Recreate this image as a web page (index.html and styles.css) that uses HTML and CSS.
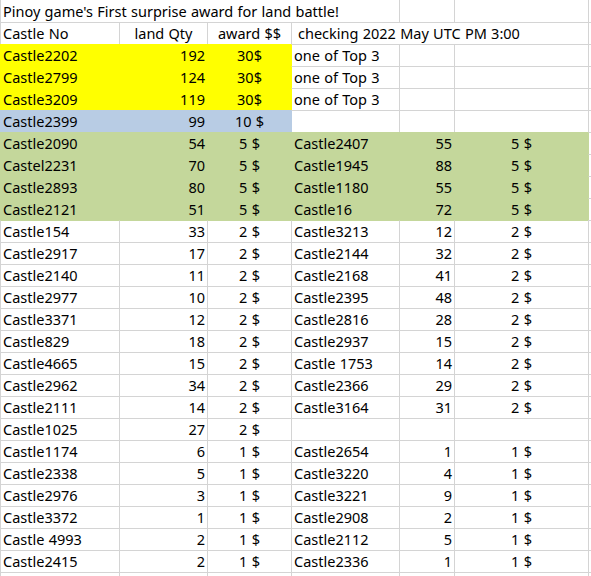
FILE: index.html
```html
<!DOCTYPE html>
<html lang="en">
<head>
<meta charset="utf-8">
<title>Pinoy game award sheet</title>
<link rel="stylesheet" href="styles.css">
</head>
<body>
<div class="sheet">
  <div class="c t0 span4">Pinoy game's First surprise award for land battle!</div>
  <div class="c t0"></div><div class="c t0"></div><div class="c t0"></div>

  <div class="c">Castle No</div><div class="c m">land Qty</div><div class="c m">award $$</div>
  <div class="c span3 ind">checking 2022 May UTC PM 3:00</div><div class="c"></div>

  <div class="c fy">Castle2202</div><div class="c fy r">192</div><div class="c fy m">30$</div>
  <div class="c ly">one of Top 3</div><div class="c"></div><div class="c"></div><div class="c"></div>

  <div class="c fy">Castle2799</div><div class="c fy r">124</div><div class="c fy m">30$</div>
  <div class="c ly">one of Top 3</div><div class="c"></div><div class="c"></div><div class="c"></div>

  <div class="c fy">Castle3209</div><div class="c fy r">119</div><div class="c fy m">30$</div>
  <div class="c ly">one of Top 3</div><div class="c"></div><div class="c"></div><div class="c"></div>

  <div class="c fb">Castle2399</div><div class="c fb r">99</div><div class="c fb m">10 $</div>
  <div class="c lb"></div><div class="c"></div><div class="c"></div><div class="c"></div>

  <div class="c fg">Castle2090</div><div class="c fg r">54</div><div class="c fg m">5 $</div>
  <div class="c fg">Castle2407</div><div class="c fg r">55</div><div class="c fg m">5 $</div><div class="c lg"></div>

  <div class="c fg">Castel2231</div><div class="c fg r">70</div><div class="c fg m">5 $</div>
  <div class="c fg">Castle1945</div><div class="c fg r">88</div><div class="c fg m">5 $</div><div class="c lg"></div>

  <div class="c fg">Castle2893</div><div class="c fg r">80</div><div class="c fg m">5 $</div>
  <div class="c fg">Castle1180</div><div class="c fg r">55</div><div class="c fg m">5 $</div><div class="c lg"></div>

  <div class="c fg">Castle2121</div><div class="c fg r">51</div><div class="c fg m">5 $</div>
  <div class="c fg">Castle16</div><div class="c fg r">72</div><div class="c fg m">5 $</div><div class="c lg"></div>

  <div class="c tg">Castle154</div><div class="c tg r">33</div><div class="c tg m">2 $</div>
  <div class="c tg">Castle3213</div><div class="c tg r">12</div><div class="c tg m">2 $</div><div class="c"></div>

  <div class="c">Castle2917</div><div class="c r">17</div><div class="c m">2 $</div>
  <div class="c">Castle2144</div><div class="c r">32</div><div class="c m">2 $</div><div class="c"></div>

  <div class="c">Castle2140</div><div class="c r">11</div><div class="c m">2 $</div>
  <div class="c">Castle2168</div><div class="c r">41</div><div class="c m">2 $</div><div class="c"></div>

  <div class="c">Castle2977</div><div class="c r">10</div><div class="c m">2 $</div>
  <div class="c">Castle2395</div><div class="c r">48</div><div class="c m">2 $</div><div class="c"></div>

  <div class="c">Castle3371</div><div class="c r">12</div><div class="c m">2 $</div>
  <div class="c">Castle2816</div><div class="c r">28</div><div class="c m">2 $</div><div class="c"></div>

  <div class="c">Castle829</div><div class="c r">18</div><div class="c m">2 $</div>
  <div class="c">Castle2937</div><div class="c r">15</div><div class="c m">2 $</div><div class="c"></div>

  <div class="c">Castle4665</div><div class="c r">15</div><div class="c m">2 $</div>
  <div class="c">Castle 1753</div><div class="c r">14</div><div class="c m">2 $</div><div class="c"></div>

  <div class="c">Castle2962</div><div class="c r">34</div><div class="c m">2 $</div>
  <div class="c">Castle2366</div><div class="c r">29</div><div class="c m">2 $</div><div class="c"></div>

  <div class="c">Castle2111</div><div class="c r">14</div><div class="c m">2 $</div>
  <div class="c">Castle3164</div><div class="c r">31</div><div class="c m">2 $</div><div class="c"></div>

  <div class="c">Castle1025</div><div class="c r">27</div><div class="c m">2 $</div>
  <div class="c"></div><div class="c"></div><div class="c"></div><div class="c"></div>

  <div class="c">Castle1174</div><div class="c r">6</div><div class="c m">1 $</div>
  <div class="c">Castle2654</div><div class="c r">1</div><div class="c m">1 $</div><div class="c"></div>

  <div class="c">Castle2338</div><div class="c r">5</div><div class="c m">1 $</div>
  <div class="c">Castle3220</div><div class="c r">4</div><div class="c m">1 $</div><div class="c"></div>

  <div class="c">Castle2976</div><div class="c r">3</div><div class="c m">1 $</div>
  <div class="c">Castle3221</div><div class="c r">9</div><div class="c m">1 $</div><div class="c"></div>

  <div class="c">Castle3372</div><div class="c r">1</div><div class="c m">1 $</div>
  <div class="c">Castle2908</div><div class="c r">2</div><div class="c m">1 $</div><div class="c"></div>

  <div class="c">Castle 4993</div><div class="c r">2</div><div class="c m">1 $</div>
  <div class="c">Castle2112</div><div class="c r">5</div><div class="c m">1 $</div><div class="c"></div>

  <div class="c">Castle2415</div><div class="c r">2</div><div class="c m">1 $</div>
  <div class="c">Castle2336</div><div class="c r">1</div><div class="c m">1 $</div><div class="c"></div>

  <div class="c"></div><div class="c"></div><div class="c"></div>
  <div class="c"></div><div class="c"></div><div class="c"></div><div class="c"></div>
</div>
</body>
</html>
```

FILE: styles.css
```css
html, body {
  margin: 0;
  padding: 0;
  background: #ffffff;
  overflow: hidden;
}

.sheet {
  display: grid;
  grid-template-columns: 119px 88px 84px 108px 55px 134px 3px;
  grid-auto-rows: 22px;
  font-family: "Noto Sans", "Open Sans", sans-serif;
  font-size: 14.5px;
  word-spacing: 0.5px;
  color: #000;
}

.c {
  box-sizing: border-box;
  border-left: 1px solid #d4d4d4;
  border-top: 1px solid #d4d4d4;
  padding: 0 2px;
  line-height: 20px;
  white-space: nowrap;
  overflow: hidden;
}

.t0 { border-top: 0; padding-top: 1px; }
.span4 { grid-column: span 4; }
.span3 { grid-column: span 3; }
.ind { padding-left: 6px; }
.r { text-align: right; }
.m { text-align: center; }

.fy { background: #ffff00; border-color: #ffff00; }
.fb { background: #b8cce4; border-color: #b8cce4; }
.fg { background: #c4d79b; border-color: #c4d79b; }

.ly { border-left-color: #ffff00; }
.lb { border-left-color: #b8cce4; }
.lg { border-left-color: #c4d79b; }
.tg { border-top-color: #c4d79b; }
```
